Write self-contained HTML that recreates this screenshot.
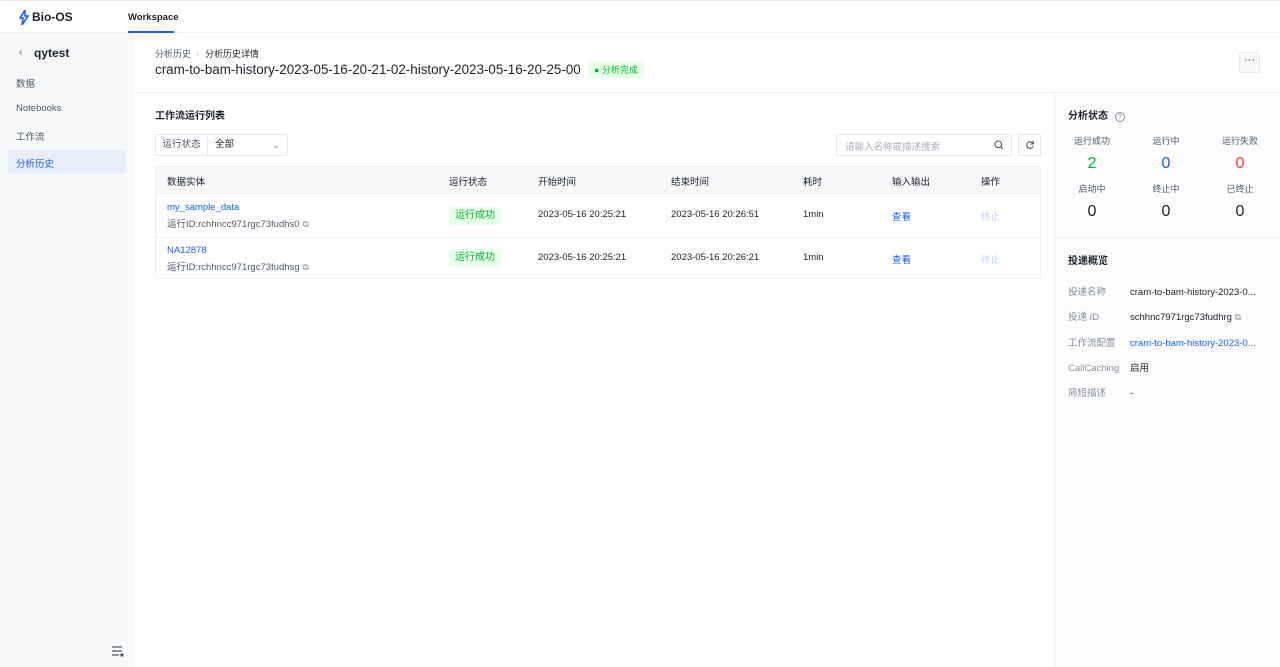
<!DOCTYPE html>
<html><head><meta charset="utf-8"><style>
*{box-sizing:border-box;margin:0;padding:0}
body{width:1280px;height:667px;overflow:hidden;font-family:"Liberation Sans","Noto Sans CJK SC",sans-serif;color:#1d2129;background:#fff;position:relative;font-size:12px}
.abs{position:absolute}
.top{left:0;top:0;width:1280px;height:33px;border-top:1px solid #e5e6eb;border-bottom:1px solid #eef0f3;background:#fff}
.side{left:0;top:33px;width:134px;height:634px;background:#f7f8fa}
.right{left:1054px;top:93px;width:226px;height:574px;background:#fcfcfd;border-left:1px solid #eef0f3}
.g{color:#86909c}
.muted{color:#4e5969}
.tag{background:#e8ffea;color:#00b42a;border-radius:2px;font-size:10px;height:18px;line-height:18px;padding:0 6px}
.link{color:#165dff}
.cp{color:#86909c;font-size:9px}
</style></head><body>
<div class="abs top">
  <svg class="abs" style="left:19px;top:9px" width="10" height="15" viewBox="0 0 10 15"><path d="M6 0L1 8h3l-1 7 6-9H6z" fill="none" stroke="#165dff" stroke-width="1.6"/></svg>
  <div class="abs" style="left:32px;top:9px;font-size:12px;font-weight:bold">Bio-OS</div>
  <div class="abs" style="left:128px;top:11px;font-size:9.5px;font-weight:bold">Workspace</div>
  <div class="abs" style="left:128px;top:30px;width:46px;height:2px;background:#165dff"></div>
</div>
<div class="abs side">
  <div class="abs" style="left:19px;top:14px;font-size:10px;color:#4e5969">‹</div>
  <div class="abs" style="left:34px;top:13px;font-size:12px;font-weight:bold">qytest</div>
  <div class="abs muted" style="left:16px;top:43px;font-size:9.5px">数据</div>
  <div class="abs muted" style="left:16px;top:70px;font-size:9.5px">Notebooks</div>
  <div class="abs muted" style="left:16px;top:96px;font-size:9.5px">工作流</div>
  <div class="abs" style="left:8px;top:117px;width:118px;height:24px;background:#e8edf7;border-radius:3px"></div>
  <div class="abs" style="left:16px;top:123px;font-size:9.5px;color:#165dff">分析历史</div>
  <svg class="abs" style="left:112px;top:613px" width="12" height="11" viewBox="0 0 12 11"><path d="M0 1h10M0 5h10M0 9h7" stroke="#4e5969" stroke-width="1.3"/><rect x="8.5" y="7.5" width="3" height="3" fill="#4e5969"/></svg>
</div>
<div class="abs" style="left:134px;top:33px;width:1146px;height:60px;border-bottom:1px solid #eef0f3">
  <div class="abs" style="left:21px;top:14px;font-size:9px;color:#4e5969">分析历史 <span style="color:#c9cdd4;margin:0 3px">›</span> <span style="color:#1d2129">分析历史详情</span></div>
  <div class="abs" style="left:21px;top:29px;font-size:13.4px;">cram-to-bam-history-2023-05-16-20-21-02-history-2023-05-16-20-25-00</div>
  <div class="abs tag" style="left:454px;top:29px;height:16px;line-height:16px;font-size:9px">● 分析完成</div>
  <div class="abs" style="left:1105px;top:19px;width:21px;height:21px;border-radius:3px;background:#f7f8fa;border:1px solid #e5e6eb;text-align:center;line-height:14px;font-size:11px">···</div>
</div>
<div class="abs" style="left:155px;top:107px;font-size:10px;font-weight:bold">工作流运行列表</div>
<div class="abs" style="left:155px;top:134px;width:133px;height:22px;border:1px solid #e5e6eb;border-radius:2px;font-size:9.5px">
  <div class="abs muted" style="left:0;top:0;width:52px;height:20px;line-height:20px;text-align:center;border-right:1px solid #e5e6eb">运行状态</div>
  <div class="abs" style="left:59px;top:0;line-height:20px">全部</div>
  <div class="abs g" style="left:116px;top:0;line-height:20px;font-size:9px">⌄</div>
</div>
<div class="abs" style="left:836px;top:134px;width:176px;height:22px;border:1px solid #e5e6eb;border-radius:2px">
  <div class="abs" style="left:8px;top:4px;font-size:9.5px;color:#a9aeb8">请输入名称或描述搜索</div>
  <svg class="abs" style="left:157px;top:5px" width="10" height="10" viewBox="0 0 10 10"><circle cx="4.3" cy="4.3" r="3.3" fill="none" stroke="#4e5969" stroke-width="1.1"/><path d="M6.8 6.8L9 9" stroke="#4e5969" stroke-width="1.1"/></svg>
</div>
<div class="abs" style="left:1018px;top:134px;width:23px;height:22px;border:1px solid #e5e6eb;border-radius:2px">
  <svg class="abs" style="left:6px;top:5px" width="10" height="10" viewBox="0 0 10 10"><path d="M8 3.5A3.3 3.3 0 1 0 8.3 6" fill="none" stroke="#4e5969" stroke-width="1.1"/><path d="M8.3 1v3h-3" fill="none" stroke="#4e5969" stroke-width="1.1"/></svg>
</div>
<div class="abs" style="left:155px;top:166px;width:886px;height:113px;border:1px solid #eef0f3;border-radius:2px;font-size:9.5px">
  <div class="abs" style="left:0;top:0;width:884px;height:27px;background:#f7f8fa;border-bottom:1px solid #eef0f3"></div>
  <div class="abs" style="left:11px;top:7px">数据实体</div>
  <div class="abs" style="left:293px;top:7px">运行状态</div>
  <div class="abs" style="left:382px;top:7px">开始时间</div>
  <div class="abs" style="left:515px;top:7px">结束时间</div>
  <div class="abs" style="left:647px;top:7px">耗时</div>
  <div class="abs" style="left:736px;top:7px">输入输出</div>
  <div class="abs" style="left:825px;top:7px">操作</div>
  <div class="abs" style="left:0;top:70px;width:884px;height:1px;background:#eef0f3"></div>
  <div class="abs link" style="left:11px;top:35px">my_sample_data</div>
  <div class="abs muted" style="left:11px;top:49px">运行ID:rchhncc971rgc73fudhs0 <span class="cp">⧉</span></div>
  <div class="abs tag" style="left:293px;top:40px">运行成功</div>
  <div class="abs" style="left:382px;top:42px">2023-05-16 20:25:21</div>
  <div class="abs" style="left:515px;top:42px">2023-05-16 20:26:51</div>
  <div class="abs" style="left:647px;top:42px">1min</div>
  <div class="abs link" style="left:736px;top:42px">查看</div>
  <div class="abs" style="left:825px;top:42px;color:#bed0fd">终止</div>
  <div class="abs link" style="left:11px;top:78px">NA12878</div>
  <div class="abs muted" style="left:11px;top:92px">运行ID:rchhncc971rgc73fudhsg <span class="cp">⧉</span></div>
  <div class="abs tag" style="left:293px;top:82px">运行成功</div>
  <div class="abs" style="left:382px;top:85px">2023-05-16 20:25:21</div>
  <div class="abs" style="left:515px;top:85px">2023-05-16 20:26:21</div>
  <div class="abs" style="left:647px;top:85px">1min</div>
  <div class="abs link" style="left:736px;top:85px">查看</div>
  <div class="abs" style="left:825px;top:85px;color:#bed0fd">终止</div>
</div>
<div class="abs right">
  <div class="abs" style="left:13px;top:14px;font-size:10px;font-weight:bold">分析状态 <span style="font-weight:normal;color:#86909c;border:1px solid #86909c;border-radius:50%;display:inline-block;width:10px;height:10px;line-height:9px;text-align:center;font-size:7px;margin-left:4px">?</span></div>
  <div class="abs" style="left:0;top:41px;width:226px;font-size:9px;color:#4e5969">
    <div class="abs" style="left:0;width:74px;text-align:center">运行成功</div>
    <div class="abs" style="left:74px;width:74px;text-align:center">运行中</div>
    <div class="abs" style="left:148px;width:74px;text-align:center">运行失败</div>
  </div>
  <div class="abs" style="left:0;top:62px;width:226px;font-size:16px">
    <div class="abs" style="left:0;width:74px;text-align:center;color:#00b42a">2</div>
    <div class="abs" style="left:74px;width:74px;text-align:center;color:#165dff">0</div>
    <div class="abs" style="left:148px;width:74px;text-align:center;color:#f53f3f">0</div>
  </div>
  <div class="abs" style="left:0;top:89px;width:226px;font-size:9px;color:#4e5969">
    <div class="abs" style="left:0;width:74px;text-align:center">启动中</div>
    <div class="abs" style="left:74px;width:74px;text-align:center">终止中</div>
    <div class="abs" style="left:148px;width:74px;text-align:center">已终止</div>
  </div>
  <div class="abs" style="left:0;top:110px;width:226px;font-size:16px">
    <div class="abs" style="left:0;width:74px;text-align:center">0</div>
    <div class="abs" style="left:74px;width:74px;text-align:center">0</div>
    <div class="abs" style="left:148px;width:74px;text-align:center">0</div>
  </div>
  <div class="abs" style="left:0;top:144px;width:226px;height:1px;background:#eef0f3"></div>
  <div class="abs" style="left:13px;top:159px;font-size:10px;font-weight:bold">投递概览</div>
  <div class="abs" style="left:13px;top:187px;font-size:9.5px;line-height:25.3px;color:#86909c">投递名称<br>投递 ID<br>工作流配置<br>CallCaching<br>简短描述</div>
  <div class="abs" style="left:75px;top:187px;font-size:9.5px;line-height:25.3px;white-space:nowrap">cram-to-bam-history-2023-0...<br>schhnc7971rgc73fudhrg <span class="cp">⧉</span><br><span class="link">cram-to-bam-history-2023-0...</span><br>启用<br>-</div>
</div>
</body></html>
